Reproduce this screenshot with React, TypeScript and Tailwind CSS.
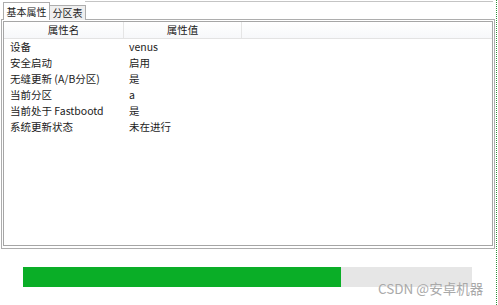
import type { FC } from 'react';

interface Prop {
  name: string;
  value: string;
}

const props: Prop[] = [
  { name: '设备', value: 'venus' },
  { name: '安全启动', value: '启用' },
  { name: '无缝更新 (A/B分区)', value: '是' },
  { name: '当前分区', value: 'a' },
  { name: '当前处于 Fastbootd', value: '是' },
  { name: '系统更新状态', value: '未在进行' },
];

const App: FC = () => {
  const progress = 318 / 449;

  return (
    <div className="relative h-[305px] w-[498px] overflow-hidden bg-white font-['Microsoft_YaHei','Noto_Sans_CJK_SC',sans-serif] text-[10.5px] text-[#1b1b1b]">
      <div className="flex h-full w-[497px] flex-col border-r border-dotted border-[#2f8f3a]">
        <div className="mt-px ml-[85px] mr-[3px] h-px bg-[#c4c4c4]" />

        {/* tabs */}
        <div className="relative z-10 flex h-[18px] items-end whitespace-nowrap pl-[3px] text-[10px]">
          <div className="flex h-[18px] w-[47px] items-center justify-center border border-b-0 border-[#adadad] bg-white leading-none">
            基本属性
          </div>
          <div className="flex h-[15px] w-[36px] items-center justify-center border border-l-0 border-b-0 border-[#adadad] bg-[#efefef] leading-none">
            分区表
          </div>
        </div>

        {/* panel */}
        <div className="-mt-px ml-px h-[230px] w-[494px] border border-[#adadad] px-px pt-px pb-[2px]">
          <div className="h-full border border-[#a6a6a6] bg-white">
            <div className="flex h-[17px] border-b border-[#e3e3e3] bg-gradient-to-b from-white to-[#f7f8fa] leading-[16px]">
              <div className="w-[120px] border-r border-[#e5e5e5] text-center">属性名</div>
              <div className="w-[118px] border-r border-[#e5e5e5] text-center">属性值</div>
            </div>
            {props.map((p) => (
              <div key={p.name} className="flex h-4 items-center whitespace-nowrap leading-4">
                <div className="w-[125px] pl-[6px]">{p.name}</div>
                <div>{p.value}</div>
              </div>
            ))}
          </div>
        </div>

        {/* progress */}
        <div className="mt-[18px] ml-[23px] h-[20px] w-[449px] bg-[#e6e6e6]">
          <div className="h-full bg-[#0aae27]" style={{ width: `${progress * 100}%` }} />
        </div>
      </div>

      <div className="absolute top-[280px] left-[378px] whitespace-nowrap text-[13.5px] leading-[17px] text-[#a9a9a9]">CSDN @安卓机器</div>
    </div>
  );
};

export default App;
